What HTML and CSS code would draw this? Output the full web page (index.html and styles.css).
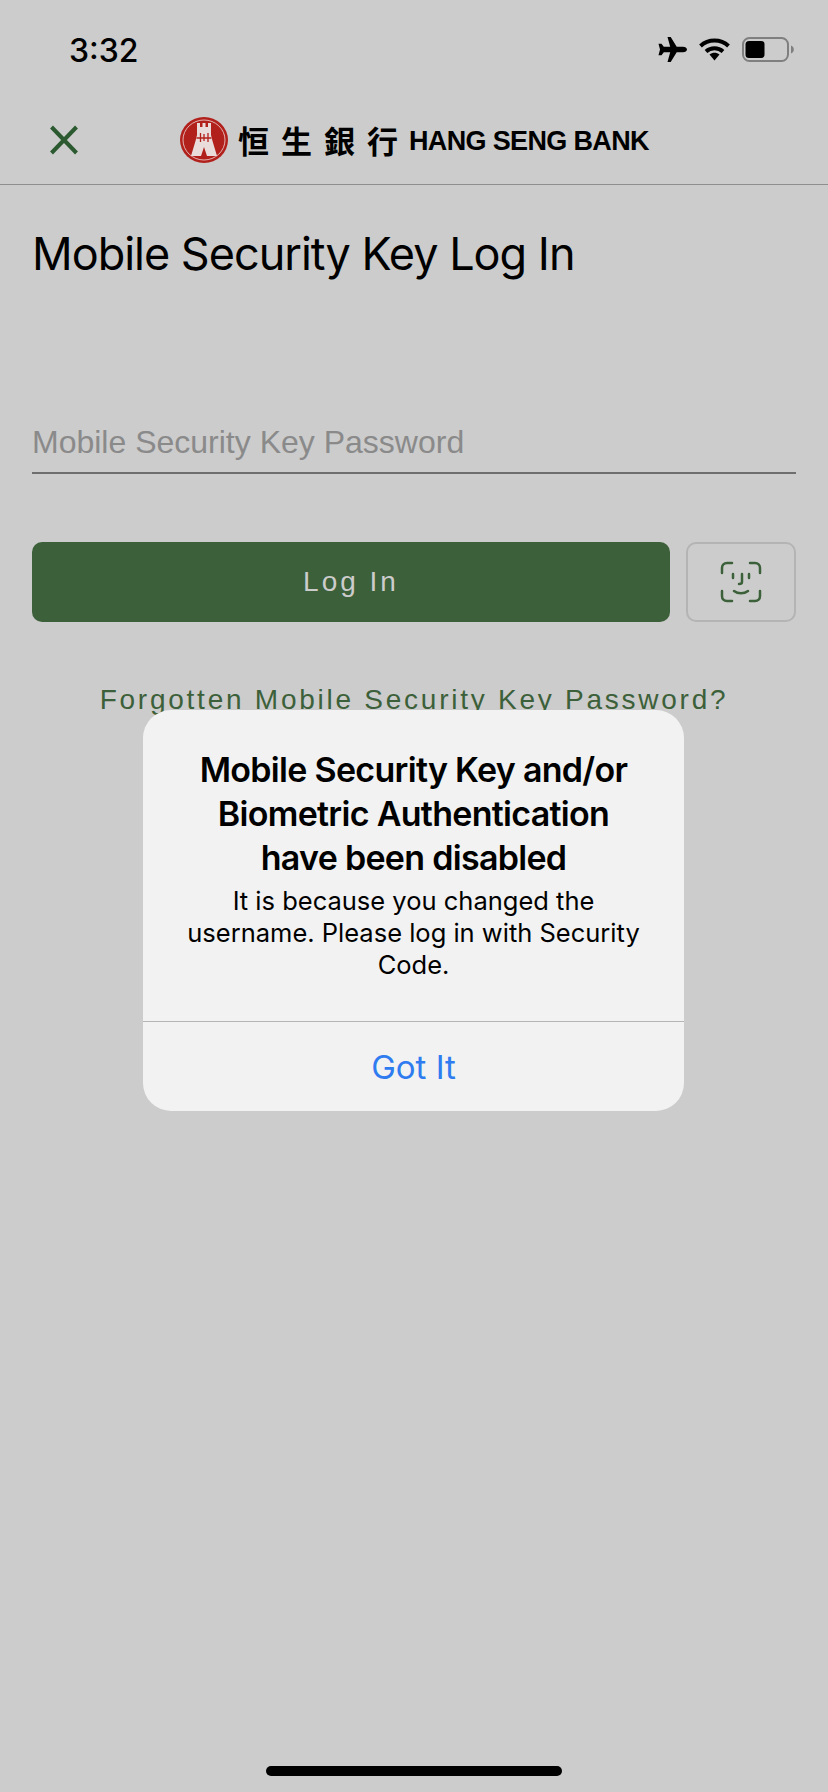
FILE: index.html
```html
<!DOCTYPE html>
<html lang="en">
<head>
    <meta charset="UTF-8">
    <meta name="viewport" content="width=device-width, initial-scale=1.0">
    <title>Mobile Security Key Log In</title>
    <link rel="stylesheet" href="styles.css">
</head>
<body>
    <div class="screen">
        <div class="status-bar">
            <span class="time">3:32</span>
            <div class="status-icons">
                <svg class="icon-plane" width="29" height="25" viewBox="0 0 29 25">
                    <path d="M9.500 0h3.200l6 9.800h6.300c2.200 0 4 1.200 4 2.700s-1.800 2.700-4 2.700h-6.300l-6 9.800H9.500l2.700-9.800H5.800l-2.300 3H0.500L2 12.500 0.500 6.800h3l2.300 3h6.400z" fill="#000"/>
                </svg>
                <svg class="icon-wifi" width="31" height="23" viewBox="0 0 31 23">
                    <path d="M1.500 8C9.300 0.800 21.700 0.800 29.500 8" fill="none" stroke="#000" stroke-width="4"/>
                    <path d="M7 13.500C11.800 9.300 19.200 9.300 24 13.500" fill="none" stroke="#000" stroke-width="4"/>
                    <path d="M10.500 16.500l5 6 5-6c-3-2.300-7-2.300-10 0z" fill="#000"/>
                </svg>
                <svg class="icon-battery" width="52" height="25" viewBox="0 0 52 25">
                    <rect x="1" y="1" width="45" height="23" rx="6.500" fill="none" stroke="#7f7f7f" stroke-width="2"/>
                    <rect x="3.500" y="4" width="19" height="17" rx="3.500" fill="#000"/>
                    <path d="M49 8.500c1.800 0.700 2.800 2.200 2.800 4s-1 3.300-2.800 4z" fill="#7f7f7f"/>
                </svg>
            </div>
        </div>

        <header class="app-header">
            <svg class="close-icon" width="32" height="32" viewBox="0 0 32 32">
                <path d="M3.500 3L28.500 29M28.500 3L3.500 29" stroke="#2c5a30" stroke-width="4" fill="none"/>
            </svg>
            <div class="logo">
                <svg class="seal" width="48" height="46" viewBox="0 0 48 46">
                    <ellipse cx="24" cy="23" rx="24" ry="23" fill="#b2201c"/>
                    <ellipse cx="24" cy="23" rx="21" ry="20" fill="none" stroke="#e3b3b0" stroke-width="1"/>
                    <path d="M17 6h3v4h2.500V6h3v4H28V6h3v12l1.500 6 4.500 15H27l-3-9-3 9H11l4.500-15 1.500-6z" fill="#e9dcda"/>
                    <path d="M16.500 21h15M20.500 16v9M28 16v9M24 17v7" stroke="#b2201c" stroke-width="1.300" fill="none"/>
                </svg>
                <span class="logo-cn">恒生銀行</span>
                <span class="logo-en">HANG SENG BANK</span>
            </div>
        </header>

        <main class="content">
            <h1>Mobile Security Key Log In</h1>
            <div class="field">Mobile Security Key Password</div>
            <div class="actions">
                <button class="login-btn">Log In</button>
                <button class="face-btn">
                    <svg width="42" height="42" viewBox="0 0 42 42">
                        <g fill="none" stroke="#3c6039" stroke-width="2.500" stroke-linecap="round">
                            <path d="M2 12V7c0-3 2-5 5-5h5"/>
                            <path d="M30 2h5c3 0 5 2 5 5v5"/>
                            <path d="M2 30v5c0 3 2 5 5 5h5"/>
                            <path d="M40 30v5c0 3-2 5-5 5h-5"/>
                            <path d="M13 13v4M29 13v4"/>
                            <path d="M22 13v8c0 1.500-1 2-3 2"/>
                            <path d="M14 30c4 3 10 3 14 0"/>
                        </g>
                    </svg>
                </button>
            </div>
            <a class="forgot">Forgotten Mobile Security Key Password?</a>
        </main>

        <div class="dialog">
            <div class="dialog-body">
                <h2>Mobile Security Key and/or Biometric Authentication have been disabled</h2>
                <p>It is because you changed the username. Please log in with Security Code.</p>
            </div>
            <div class="dialog-btn">Got It</div>
        </div>

        <div class="home-bar"></div>
    </div>
</body>
</html>
```

FILE: styles.css
```css
:root {
    --bg: #cccccc;
    --green: #3c6039;
    --dialog: #f2f2f2;
}

* {
    box-sizing: border-box;
}

html, body {
    margin: 0;
    padding: 0;
}

body {
    background-color: var(--bg);
    font-family: "Liberation Sans", Arial, sans-serif;
    color: #000;
}

.screen {
    position: relative;
    width: 828px;
    height: 1792px;
    overflow: hidden;
}

.status-bar {
    height: 88px;
    padding: 29px 34px 0 69px;
    display: flex;
    justify-content: space-between;
    align-items: flex-start;
}

.time {
    font-family: Inter, sans-serif;
    font-size: 32px;
    line-height: 44px;
    font-weight: 500;
    height: 44px;
}

.status-icons {
    display: flex;
    align-items: center;
    gap: 12px;
    margin-top: 8px;
}

.app-header {
    height: 97px;
    display: flex;
    align-items: center;
    padding: 7px 0 0 48px;
    border-bottom: 1px solid #8e8e8e;
}

.close-icon {
    flex: none;
}

.logo {
    display: flex;
    align-items: center;
    margin-left: 100px;
}

.logo-cn {
    font-family: "Noto Sans CJK TC", sans-serif;
    font-size: 31px;
    line-height: 36px;
    font-weight: 700;
    letter-spacing: 12px;
    margin-left: 10px;
    width: 171px;
    white-space: nowrap;
}

.logo-en {
    font-family: "Liberation Sans", sans-serif;
    font-size: 27px;
    font-weight: 700;
    letter-spacing: -0.65px;
    margin-top: 3px;
    white-space: nowrap;
}

.content {
    padding: 0 32px;
}

h1 {
    margin: 43px 0 0;
    font-family: Inter, sans-serif;
    font-size: 45px;
    line-height: 52px;
    font-weight: 400;
    letter-spacing: -1px;
}

.field {
    margin-top: 144px;
    height: 50px;
    font-size: 32px;
    line-height: 36px;
    color: #8a8a8a;
    border-bottom: 2px solid #6e6e6e;
}

.actions {
    display: flex;
    gap: 16px;
    margin-top: 68px;
}

.login-btn {
    flex: 1;
    height: 80px;
    background-color: var(--green);
    color: #cccccc;
    border: none;
    border-radius: 10px;
    font-family: "Liberation Sans", sans-serif;
    font-size: 28px;
    letter-spacing: 3px;
}

.face-btn {
    flex: none;
    width: 110px;
    height: 80px;
    background: none;
    border: 2px solid #b4b4b4;
    border-radius: 10px;
    padding: 0;
    display: flex;
    align-items: center;
    justify-content: center;
}

.forgot {
    display: block;
    margin-top: 62px;
    text-align: center;
    font-size: 28px;
    line-height: 32px;
    letter-spacing: 2.75px;
    color: var(--green);
    white-space: nowrap;
}

.dialog {
    position: absolute;
    left: 143px;
    top: 710px;
    width: 541px;
    height: 401px;
    background-color: var(--dialog);
    border-radius: 28px;
    display: flex;
    flex-direction: column;
    text-align: center;
}

.dialog-body {
    height: 312px;
    padding: 38px 40px 0;
    border-bottom: 1px solid #b5b5b5;
}

.dialog h2 {
    margin: 0;
    font-family: Inter, sans-serif;
    font-size: 34px;
    line-height: 44px;
    font-weight: 600;
    letter-spacing: -0.7px;
}

.dialog p {
    margin: 5px -4px 0;
    font-family: Inter, sans-serif;
    font-size: 25.5px;
    line-height: 32px;
    font-weight: 400;
}

.dialog-btn {
    flex: 1;
    display: flex;
    align-items: center;
    justify-content: center;
    font-family: Inter, sans-serif;
    font-size: 33px;
    color: #2f7bf0;
}

.home-bar {
    position: absolute;
    left: 266px;
    bottom: 16px;
    width: 296px;
    height: 10px;
    border-radius: 5px;
    background-color: #000;
}
```
